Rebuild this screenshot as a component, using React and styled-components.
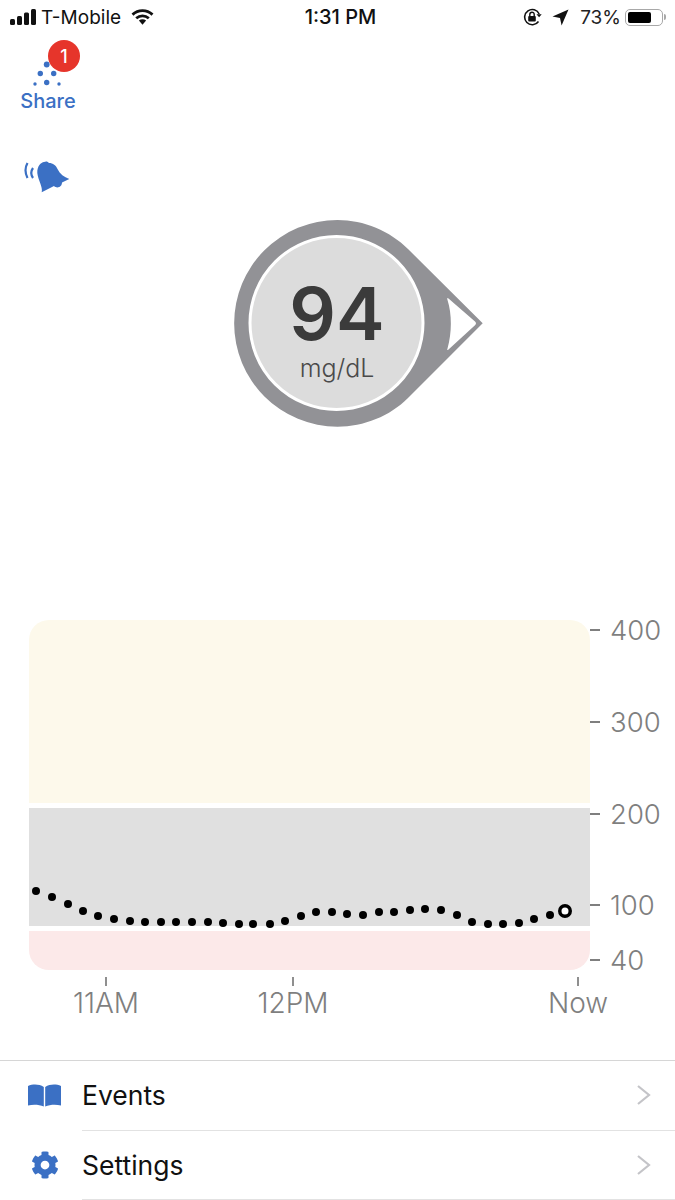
import React from 'react';
import styled, { createGlobalStyle } from 'styled-components';
import { FaCog } from 'react-icons/fa';

const BLUE = '#3b70c4';
const AXIS = '#7f7f7f';

const GlobalStyle = createGlobalStyle`
  html, body { margin: 0; padding: 0; background: #fff; }
  body { font-family: Inter, "Liberation Sans", sans-serif; }
`;

const Page = styled.div`
  width: 675px;
  height: 1200px;
  overflow: hidden;
  background: #fff;
`;

// Status bar
const StatusBar = styled.div`
  height: 34px;
  display: grid;
  grid-template-columns: 1fr auto 1fr;
  align-items: center;
  padding: 0 9px 0 10px;
  color: #111;
  font-size: 19px;
`;

const StatusGroup = styled.div`
  display: flex;
  align-items: center;
  justify-content: ${props => (props.$end ? 'flex-end' : 'flex-start')};
`;

const Carrier = styled.span`
  margin: 0 10px 0 5px;
`;

const Clock = styled.span`
  font-weight: 500;
  font-size: 20px;
  margin-left: 5px;
`;

const BatteryPercent = styled.span`
  margin: 0 4px 0 11px;
  color: #222;
`;

const Battery = styled.div`
  width: 38px;
  height: 17px;
  margin-right: 3px;
  box-sizing: border-box;
  border: 1.5px solid #a8a8a8;
  border-radius: 5px;
  padding: 2px;
  position: relative;

  &::before {
    content: '';
    display: block;
    width: 73%;
    height: 100%;
    background: #000;
    border-radius: 2px;
  }

  &::after {
    content: '';
    position: absolute;
    right: -4px;
    top: 4px;
    width: 2px;
    height: 6px;
    background: #a8a8a8;
    border-radius: 0 2px 2px 0;
  }
`;

// Share button and alert bell
const ShareBlock = styled.div`
  position: relative;
  width: 54px;
  margin: 6px 0 0 21px;
  padding-top: 20px;
  display: flex;
  flex-direction: column;
  align-items: center;
`;

const ShareLabel = styled.span`
  color: ${BLUE};
  font-size: 20px;
  font-weight: 500;
  line-height: 27px;
`;

const Badge = styled.span`
  position: absolute;
  left: 27px;
  top: 0;
  width: 32px;
  height: 32px;
  border-radius: 50%;
  background: #e6352b;
  color: #fff;
  font-size: 18px;
  font-weight: 500;
  display: flex;
  align-items: center;
  justify-content: center;
`;

const BellIcon = styled.svg`
  display: block;
  margin: 45px 0 0 24px;
`;

// Glucose reading
const Gauge = styled.div`
  position: relative;
  width: 260px;
  height: 212px;
  margin: 22px 0 0 230px;
`;

const GaugeText = styled.div`
  position: absolute;
  left: 0;
  top: 0;
  width: 214px;
  height: 210px;
  display: flex;
  flex-direction: column;
  align-items: center;
  justify-content: center;
`;

const Reading = styled.span`
  color: #3b3b3b;
  font-size: 73px;
  font-weight: 600;
  line-height: 64px;
  margin-top: 18px;
`;

const Unit = styled.span`
  color: #4a4a4a;
  font-size: 25px;
  font-weight: 300;
  line-height: 30px;
  margin-top: 7px;
`;

// Trend chart
const Chart = styled.div`
  margin-top: 185px;
`;

const ChartRow = styled.div`
  display: flex;
`;

const Plot = styled.div`
  position: relative;
  width: 561px;
  margin: 5px 0 0 29px;
  display: flex;
  flex-direction: column;
  gap: 5px;
`;

const Band = styled.div`
  height: ${props => props.$height}px;
  background: ${props => props.$color};
  border-radius: ${props => props.$radius || '0'};
`;

const DotLayer = styled.svg`
  position: absolute;
  left: 0;
  top: 0;
`;

const YAxis = styled.div`
  display: flex;
  flex-direction: column;
`;

const YTick = styled.div`
  height: 30px;
  margin-top: ${props => props.$space}px;
  display: flex;
  align-items: center;
  gap: 10px;
  color: ${AXIS};
  font-size: 27.5px;
  font-weight: 300;

  &::before {
    content: '';
    width: 10px;
    height: 2px;
    background: ${AXIS};
  }
`;

const XAxis = styled.div`
  display: flex;
  padding-left: 56px;
`;

const XTick = styled.div`
  width: 100px;
  margin-left: ${props => props.$space || 0}px;
  display: flex;
  flex-direction: column;
  align-items: center;
  color: ${AXIS};
  font-size: 28px;
  font-weight: 300;
  line-height: 32px;
  padding-top: 2px;
  box-sizing: border-box;

  &::before {
    content: '';
    width: 2px;
    height: 9px;
    background: #8f8f8f;
    margin-bottom: 1px;
  }
`;

// Bottom menu
const Menu = styled.div`
  margin-top: 41px;
  border-top: 1px solid #d6d6d6;
`;

const MenuRow = styled.div`
  height: 69.5px;
  display: flex;
  align-items: center;
`;

const MenuIcon = styled.div`
  width: 82px;
  flex: none;
  display: flex;
  justify-content: center;
  padding-left: 7px;
  box-sizing: border-box;
  color: ${BLUE};
`;

const MenuBody = styled.div`
  flex: 1;
  height: 100%;
  display: flex;
  align-items: center;
  justify-content: space-between;
  box-sizing: border-box;
  padding-right: 23px;
  border-bottom: 1px solid #e2e2e2;
  color: #111;
  font-size: 26.5px;
`;

// glucose samples, five minutes apart, x/y inside the plot
const samples = [
  [7, 271], [23, 277], [39, 284], [54, 291], [69, 296], [85, 299], [101, 301],
  [116, 302], [132, 302], [147, 302], [163, 302], [179, 302], [194, 303],
  [210, 304], [224, 304], [241, 304], [256, 301], [272, 296], [287, 292],
  [303, 292], [318, 294], [334, 295], [350, 292], [365, 292], [381, 290],
  [396, 289], [412, 290], [428, 295], [443, 302], [459, 304], [474, 304],
  [490, 303], [505, 299], [521, 295],
];

const SignalIcon = () => (
  <svg width="26" height="16" viewBox="0 0 26 16">
    <rect x="0" y="10" width="5" height="6" rx="1.5" fill="#111" />
    <rect x="7" y="7" width="5" height="9" rx="1.5" fill="#111" />
    <rect x="14" y="3.5" width="5" height="12.5" rx="1.5" fill="#111" />
    <rect x="21" y="0" width="5" height="16" rx="1.5" fill="#111" />
  </svg>
);

const WifiIcon = () => (
  <svg width="23" height="16" viewBox="0 0 23 16">
    <path d="M1.5 5.6C7.2 .4 15.8 .4 21.5 5.6" fill="none" stroke="#111" strokeWidth="2.8" />
    <path d="M5.2 9.2C8.9 6 14.1 6 17.8 9.2" fill="none" stroke="#111" strokeWidth="2.8" />
    <path d="M7.9 11.6C10 9.9 13 9.9 15.1 11.6L11.5 15.8Z" fill="#111" />
  </svg>
);

const RotationLockIcon = () => (
  <svg width="19" height="18" viewBox="0 0 19 18">
    <path d="M15.5 13.5A7.6 7.6 0 1 1 16.2 6" fill="none" stroke="#111" strokeWidth="1.6" />
    <path d="M13.5 6.2h5.2l-2.6 3Z" fill="#111" />
    <rect x="5.2" y="8" width="7.6" height="5.6" rx="1" fill="#111" />
    <path d="M6.8 8V6.4a2.2 2.2 0 0 1 4.4 0V8" fill="none" stroke="#111" strokeWidth="1.4" />
  </svg>
);

const LocationIcon = styled.svg`
  margin-left: 10px;
`;

const ShareDots = () => (
  <svg width="32" height="28" viewBox="0 0 32 28">
    <g fill={BLUE}>
      <circle cx="14.7" cy="4.5" r="2.9" />
      <circle cx="8.3" cy="13.5" r="2.7" />
      <circle cx="21.7" cy="13.5" r="2.7" />
      <circle cx="14.7" cy="22.5" r="2.7" />
      <circle cx="3" cy="24" r="1.7" />
      <circle cx="27" cy="24" r="1.7" />
    </g>
  </svg>
);

const GaugeDrawing = () => (
  <svg width="260" height="212" viewBox="0 0 260 212">
    <path
      d="M107.5 2C134 2 160 13 178 31L252.7 105.300L178 180C160 198 134 208.700 107.500 208.700A103.350 103.350 0 0 1 107.500 2Z"
      fill="#929296"
    />
    <circle cx="106.500" cy="105" r="86.500" fill="#dcdcdc" stroke="#fff" strokeWidth="3" />
    <path
      d="M218.500 80.500L245 103.500Q247 105.300 245 107.200L218.500 131.500Q216.500 133 217.500 130.500C222 115 222 96 217.500 82Q216.500 78.800 218.500 80.500Z"
      fill="#fff"
    />
  </svg>
);

const BookIcon = () => (
  <svg width="33" height="23" viewBox="0 0 33 23">
    <path d="M15.800 3V22.500C11 20.500 5 20.300 0 21.500V2C5 0 11 0 15.800 3Z" fill={BLUE} />
    <path d="M17.200 3V22.500C22 20.500 28 20.300 33 21.500V2C28 0 22 0 17.200 3Z" fill={BLUE} />
  </svg>
);

const Chevron = () => (
  <svg width="16" height="22" viewBox="0 0 16 22">
    <path d="M2 2L13 11 2 20" fill="none" stroke="#c4c4c8" strokeWidth="2.2" />
  </svg>
);

const App = () => (
  <Page>
    <GlobalStyle />
    <StatusBar>
      <StatusGroup>
        <SignalIcon />
        <Carrier>T-Mobile</Carrier>
        <WifiIcon />
      </StatusGroup>
      <Clock>1:31 PM</Clock>
      <StatusGroup $end>
        <RotationLockIcon />
        <LocationIcon width="17" height="17" viewBox="0 0 17 17">
          <path d="M16.5 .5L9.6 16.5 8 9 .5 7.6Z" fill="#111" />
        </LocationIcon>
        <BatteryPercent>73%</BatteryPercent>
        <Battery />
      </StatusGroup>
    </StatusBar>

    <ShareBlock>
      <Badge>1</Badge>
      <ShareDots />
      <ShareLabel>Share</ShareLabel>
    </ShareBlock>

    <BellIcon width="48" height="36" viewBox="0 0 48 36">
      <path
        d="M17.700 32.300C19 27 14 20 13.300 13C13 6 17 2.500 20 2C22 1 24 1.500 25 3C29 3 32 5.500 33.500 9C36 14 40 17 45.300 19L38 22.500C38 27 33 29 30 26Z"
        fill={BLUE}
      />
      <path d="M3.500 3Q-.5 10 3.500 18" fill="none" stroke={BLUE} strokeWidth="2.200" />
      <path d="M9 8Q5.500 13 9 18" fill="none" stroke={BLUE} strokeWidth="2.200" />
    </BellIcon>

    <Gauge>
      <GaugeDrawing />
      <GaugeText>
        <Reading>94</Reading>
        <Unit>mg/dL</Unit>
      </GaugeText>
    </Gauge>

    <Chart>
      <ChartRow>
        <Plot>
          <Band $height={183} $color="#fdf9eb" $radius="20px 20px 0 0" />
          <Band $height={118} $color="#e0e0e0" />
          <Band $height={39} $color="#fce9e9" $radius="0 0 20px 20px" />
          <DotLayer width="561" height="350" viewBox="0 0 561 350">
            {samples.map(([x, y]) => (
              <circle key={x} cx={x} cy={y} r="4" fill="#000" />
            ))}
            <circle cx="536" cy="291" r="5.250" fill="#fff" stroke="#000" strokeWidth="3.500" />
          </DotLayer>
        </Plot>
        <YAxis>
          <YTick $space={0}>400</YTick>
          <YTick $space={62}>300</YTick>
          <YTick $space={62}>200</YTick>
          <YTick $space={61}>100</YTick>
          <YTick $space={25}>40</YTick>
        </YAxis>
      </ChartRow>
      <XAxis>
        <XTick>11AM</XTick>
        <XTick $space={87}>12PM</XTick>
        <XTick $space={185}>Now</XTick>
      </XAxis>
    </Chart>

    <Menu>
      <MenuRow>
        <MenuIcon><BookIcon /></MenuIcon>
        <MenuBody>
          Events
          <Chevron />
        </MenuBody>
      </MenuRow>
      <MenuRow>
        <MenuIcon><FaCog size={28} /></MenuIcon>
        <MenuBody>
          Settings
          <Chevron />
        </MenuBody>
      </MenuRow>
    </Menu>
  </Page>
);

export default App;
